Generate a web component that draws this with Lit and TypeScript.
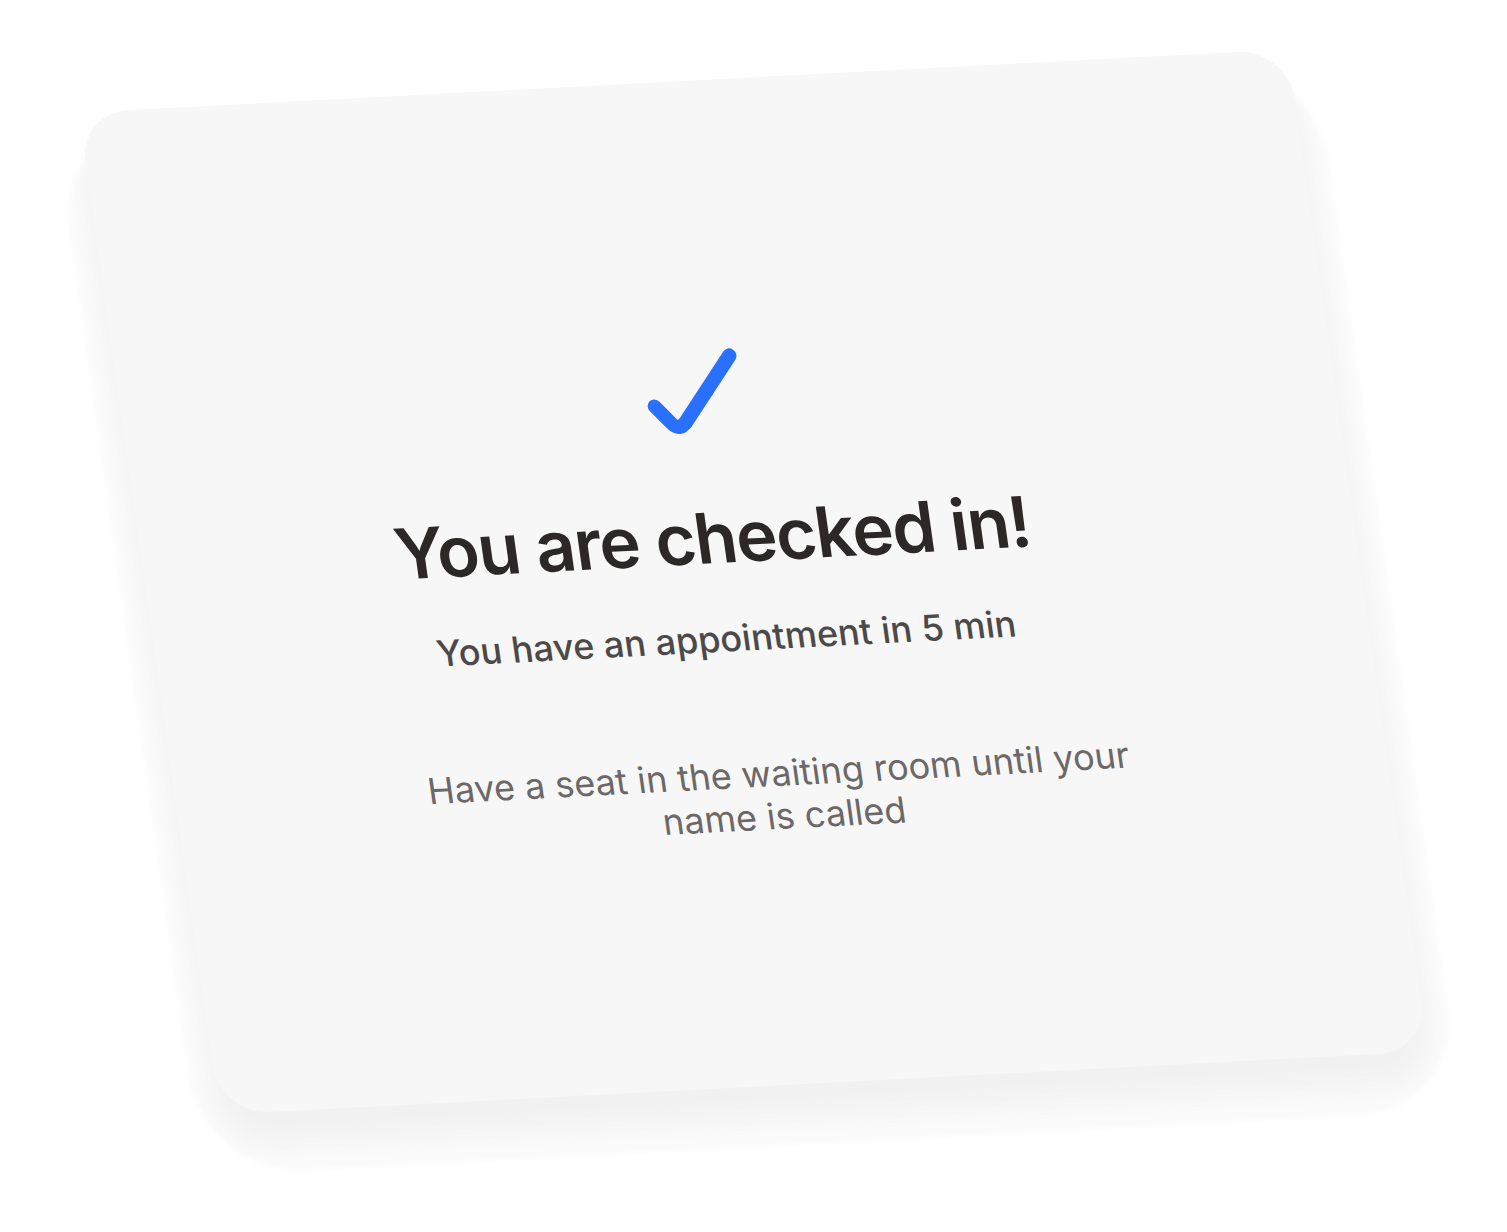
import { LitElement, html, css } from "lit";
import { customElement } from "lit/decorators.js";

@customElement("check-icon")
export class CheckIcon extends LitElement {
  static styles = css`
    :host {
      display: block;
    }
    .icon {
      display: block;
      width: 108px;
      height: 108px;
    }
  `;

  render() {
    return html`
      <svg class="icon" viewBox="0 0 108 108" fill="none" aria-hidden="true">
        <path
          d="M14.8 59.6 L29.4 77.6 Q35.9 85.4 43.6 76.8 L96.3 12.4"
          stroke="#2970ff"
          stroke-width="14"
          stroke-linecap="round"
          stroke-linejoin="round"
        />
      </svg>
    `;
  }
}

@customElement("app-root")
export class AppRoot extends LitElement {
  static styles = css`
    :host {
      display: block;
      min-height: 100vh;
      box-sizing: border-box;
      overflow: hidden;
      padding: 78px 148px;
      background: #ffffff;
      font-family: Inter, "Liberation Sans", sans-serif;
    }
    /* Wide, soft halo with rounder corners than the card itself */
    .sheet {
      border-radius: 76px;
      box-shadow: 0 36px 6px 24px #fafafa;
      transform: rotate(-3deg) skewX(5deg);
    }
    .card {
      display: flex;
      flex-direction: column;
      align-items: center;
      gap: 94px;
      box-sizing: border-box;
      padding: 264px 64px 247px;
      border-radius: 50px;
      background: #f7f7f7;
      box-shadow: 0 30px 24px 0 #f1f1f1;
      text-align: center;
    }
    .status {
      display: flex;
      flex-direction: column;
      align-items: center;
      margin-right: 70px;
    }
    .title {
      margin: 42px 0 35px;
      font-size: 70px;
      font-weight: 600;
      line-height: 88px;
      letter-spacing: -0.02em;
      color: #2d2828;
    }
    .appointment {
      margin: 0;
      font-size: 36px;
      font-weight: 500;
      line-height: 44px;
      color: #4d4949;
    }
    .hint {
      max-width: 744px;
      margin: 0 4px 0 0;
      font-size: 36px;
      font-weight: 400;
      line-height: 43px;
      color: #6c6868;
    }
  `;

  render() {
    return html`
      <div class="sheet">
        <main class="card">
          <div class="status">
            <check-icon></check-icon>
            <h1 class="title">You are checked in!</h1>
            <p class="appointment">You have an appointment in 5 min</p>
          </div>
          <p class="hint">Have a seat in the waiting room until your name is called</p>
        </main>
      </div>
    `;
  }
}
